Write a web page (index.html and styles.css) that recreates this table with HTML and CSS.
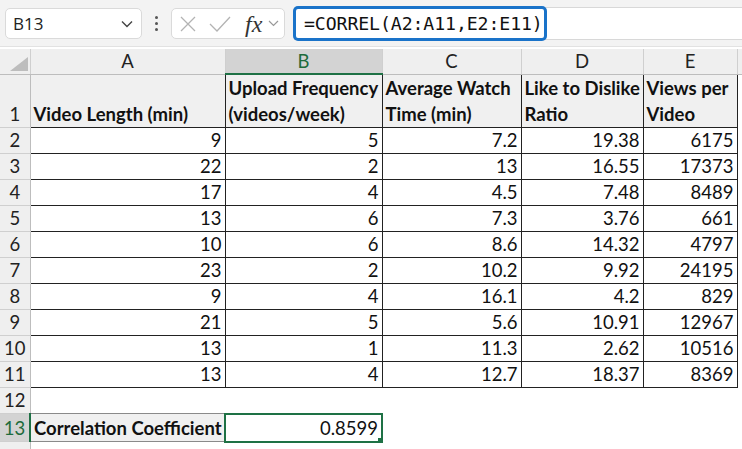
FILE: index.html
```html
<!DOCTYPE html>
<html>
<head>
<meta charset="utf-8">
<link rel="stylesheet" href="styles.css">
</head>
<body>
<div class="toolbar">
  <div class="namebox">
    <span class="name">B13</span>
    <svg class="chev" width="12" height="8" viewBox="0 0 12 8"><path d="M1 1.5 L6 6.5 L11 1.5" fill="none" stroke="#444" stroke-width="1.4"/></svg>
  </div>
  <div class="dots"><span></span><span></span><span></span></div>
  <div class="fxbox">
    <svg width="20" height="20" viewBox="0 0 20 20"><path d="M3 3 L17 17 M17 3 L3 17" stroke="#b3b3b3" stroke-width="1.3" fill="none"/></svg>
    <svg class="check" width="24" height="20" viewBox="0 0 24 20"><path d="M2 10 L9 17 L22 3" stroke="#b3b3b3" stroke-width="1.3" fill="none"/></svg>
    <span class="fx">fx</span>
    <svg class="chev2" width="11" height="7" viewBox="0 0 11 7"><path d="M1 1 L5.5 5.5 L10 1" fill="none" stroke="#999" stroke-width="1.2"/></svg>
  </div>
  <div class="formula">
    <div class="ftext">=CORREL(A2:A11,E2:E11)</div>
  </div>
</div>
<table class="sheet">
  <colgroup>
    <col class="c-rh"><col class="c-a"><col class="c-b"><col class="c-c"><col class="c-d"><col class="c-e"><col class="c-f">
  </colgroup>
  <tr class="colhdr">
    <th class="corner"><svg width="18" height="14" viewBox="0 0 18 14"><path d="M18 0 L18 14 L0 14 Z" fill="#bdbdbd"/></svg></th>
    <th>A</th><th class="selcol">B</th><th>C</th><th>D</th><th>E</th><th></th>
  </tr>
  <tr class="r1">
    <th class="rh">1</th>
    <td class="hd">Video Length (min)</td>
    <td class="hd">Upload Frequency<br>(videos/week)</td>
    <td class="hd">Average Watch<br>Time (min)</td>
    <td class="hd">Like to Dislike<br>Ratio</td>
    <td class="hd">Views per<br>Video</td>
    <td class="empty"></td>
  </tr>
  <tr class="r"><th class="rh">2</th><td class="n">9</td><td class="n">5</td><td class="n">7.2</td><td class="n">19.38</td><td class="n">6175</td><td class="empty"></td></tr>
  <tr class="r"><th class="rh">3</th><td class="n">22</td><td class="n">2</td><td class="n">13</td><td class="n">16.55</td><td class="n">17373</td><td class="empty"></td></tr>
  <tr class="r"><th class="rh">4</th><td class="n">17</td><td class="n">4</td><td class="n">4.5</td><td class="n">7.48</td><td class="n">8489</td><td class="empty"></td></tr>
  <tr class="r"><th class="rh">5</th><td class="n">13</td><td class="n">6</td><td class="n">7.3</td><td class="n">3.76</td><td class="n">661</td><td class="empty"></td></tr>
  <tr class="r"><th class="rh">6</th><td class="n">10</td><td class="n">6</td><td class="n">8.6</td><td class="n">14.32</td><td class="n">4797</td><td class="empty"></td></tr>
  <tr class="r"><th class="rh">7</th><td class="n">23</td><td class="n">2</td><td class="n">10.2</td><td class="n">9.92</td><td class="n">24195</td><td class="empty"></td></tr>
  <tr class="r"><th class="rh">8</th><td class="n">9</td><td class="n">4</td><td class="n">16.1</td><td class="n">4.2</td><td class="n">829</td><td class="empty"></td></tr>
  <tr class="r"><th class="rh">9</th><td class="n">21</td><td class="n">5</td><td class="n">5.6</td><td class="n">10.91</td><td class="n">12967</td><td class="empty"></td></tr>
  <tr class="r"><th class="rh">10</th><td class="n">13</td><td class="n">1</td><td class="n">11.3</td><td class="n">2.62</td><td class="n">10516</td><td class="empty"></td></tr>
  <tr class="r"><th class="rh">11</th><td class="n">13</td><td class="n">4</td><td class="n">12.7</td><td class="n">18.37</td><td class="n">8369</td><td class="empty"></td></tr>
  <tr class="r12"><th class="rh">12</th><td class="empty"></td><td class="empty"></td><td class="empty"></td><td class="empty"></td><td class="empty"></td><td class="empty"></td></tr>
  <tr class="r13"><th class="rh selrow">13</th><td class="hd lbl">Correlation Coefficient</td><td class="n sel">0.8599<span class="handle"></span></td><td class="empty"></td><td class="empty"></td><td class="empty"></td><td class="empty"></td></tr>
  <tr class="r14"><th class="rh"></th><td class="empty"></td><td class="empty"></td><td class="empty"></td><td class="empty"></td><td class="empty"></td><td class="empty"></td></tr>
</table>
</body>
</html>
```
FILE: styles.css
```css
html, body {
  margin: 0;
  padding: 0;
  background: #ffffff;
  overflow: hidden;
}
body {
  width: 742px;
  height: 449px;
  font-family: Lato, "Liberation Sans", sans-serif;
}
.toolbar {
  height: 47px;
  background: #f3f3f3;
  display: flex;
  align-items: flex-start;
  padding-top: 8px;
  box-sizing: border-box;
  border-bottom: 1px solid #e2e2e2;
}
.namebox {
  margin-left: 5px;
  width: 137px;
  height: 31px;
  box-sizing: border-box;
  background: #fff;
  border: 1px solid #dadada;
  border-radius: 5px;
  display: flex;
  align-items: center;
  justify-content: space-between;
  padding: 0 8px 0 7px;
}
.name {
  font-family: "Open Sans", "Noto Sans", sans-serif;
  font-size: 17px;
  color: #222;
}
.dots {
  width: 29px;
  height: 31px;
  display: flex;
  flex-direction: column;
  align-items: center;
  justify-content: center;
  gap: 3px;
}
.dots span {
  width: 3px;
  height: 3px;
  border-radius: 50%;
  background: #555;
}
.fxbox {
  width: 114px;
  height: 31px;
  box-sizing: border-box;
  background: #fff;
  border: 1px solid #dadada;
  border-radius: 5px;
  display: flex;
  align-items: center;
  padding-left: 6px;
}
.check { margin-left: 10px; }
.fx {
  font-family: "Liberation Serif", serif;
  font-style: italic;
  font-size: 24px;
  color: #333;
  margin-left: 13px;
  line-height: 1;
  margin-top: 0;
}
.chev2 { margin-left: 6px; }
.formula {
  margin-left: 9px;
  flex: 1;
  height: 33px;
  margin-top: -1px;
  background: #fff;
  border-top: 1px solid #d8d8d8;
  border-bottom: 1px solid #d8d8d8;
  box-sizing: border-box;
  position: relative;
}
.ftext {
  position: absolute;
  left: -1px;
  top: -2px;
  width: 254px;
  height: 35px;
  box-sizing: border-box;
  border: 3px solid #1a73c9;
  border-radius: 5px;
  padding-left: 8px;
  font-family: "DejaVu Sans Mono", monospace;
  font-size: 18.2px;
  line-height: 29px;
  color: #111;
  letter-spacing: -0.1px;
}
.sheet {
  border-collapse: collapse;
  table-layout: fixed;
  width: 742px;
  margin-top: 2px;
}
.c-rh { width: 30px; }
.c-a { width: 195px; }
.c-b { width: 157px; }
.c-c { width: 139px; }
.c-d { width: 122px; }
.c-e { width: 94px; }
.c-f { width: 5px; }
th, td {
  padding: 0;
  overflow: hidden;
  white-space: nowrap;
}
.colhdr { height: 25px; }
.colhdr th {
  background: #efefef;
  font-weight: normal;
  font-size: 18.5px;
  color: #222;
  border-right: 1px solid #cfcfcf;
  border-bottom: 1px solid #bdbdbd;
  text-align: center;
  vertical-align: middle;
}
.colhdr th.corner {
  background: #efefef;
  text-align: right;
  vertical-align: bottom;
  padding: 0 2px 3px 0;
  line-height: 0;
}
.colhdr th.selcol {
  background: #d3d3d3;
  color: #1e6b3c;
  border-bottom: 2px solid #1e7145;
}
th.rh {
  background: #efefef;
  font-weight: normal;
  font-size: 18.5px;
  color: #222;
  text-align: center;
  vertical-align: bottom;
  padding-bottom: 0;
  border-right: 1px solid #bdbdbd;
  border-bottom: 1px solid #cfcfcf;
  line-height: 25px;
}
th.selrow {
  background: #d3d3d3;
  color: #1e6b3c;
  border-right: 2px solid #1e7145;
}
.r1 { height: 53px; }
.r { height: 26px; }
.r12 { height: 25px; }
.r13 { height: 28px; }
.r14 { height: 20px; }
td {
  font-size: 18.5px;
  color: #111;
  vertical-align: bottom;
  line-height: 25px;
}
td.hd {
  background: #f0f0f0;
  font-weight: bold;
  border: 1px solid #222;
  padding-left: 3px;
  line-height: 26px;
}
td.n {
  text-align: right;
  padding-right: 3px;
  border: 1px solid #222;
}
td.empty {
  border: none;
}
td.lbl {
  border: 1px solid #8a8a8a;
}
td.sel {
  border: 2px solid #1e7145;
  position: relative;
}
.handle {
  position: absolute;
  right: -2px;
  bottom: -2px;
  width: 5px;
  height: 5px;
  background: #1e7145;
}
```
